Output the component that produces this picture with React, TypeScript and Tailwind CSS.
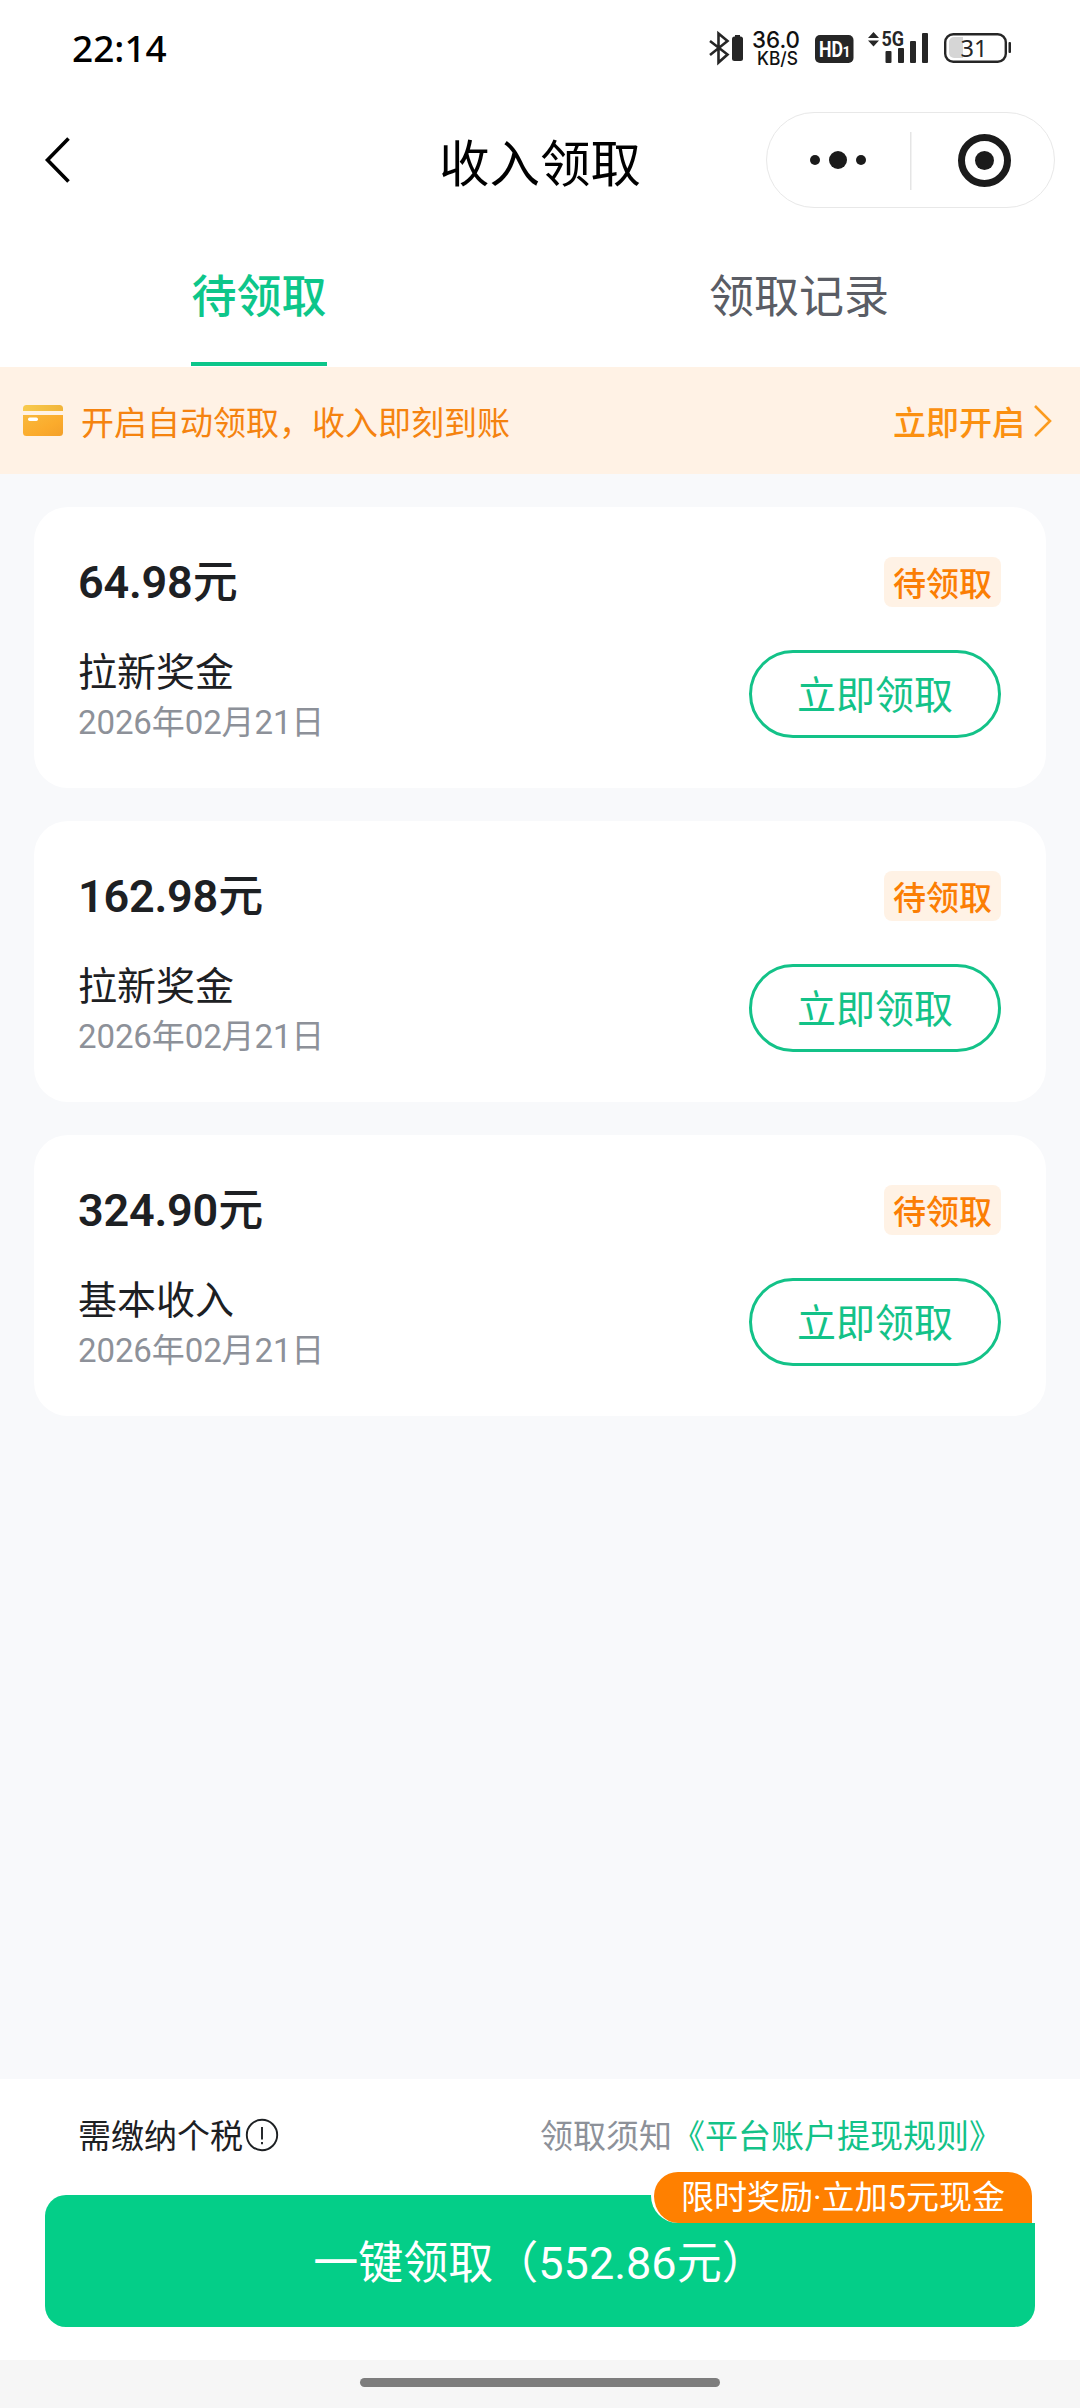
const FONT = "font-[Roboto,'Noto_Sans_CJK_SC',sans-serif]";

const records = [
  { amount: '64.98', title: '拉新奖金', date: '2026年02月21日' },
  { amount: '162.98', title: '拉新奖金', date: '2026年02月21日' },
  { amount: '324.90', title: '基本收入', date: '2026年02月21日' },
];

function StatusIcons() {
  return (
    <svg width="306" height="60" viewBox="708 18 306 60" fill="none">
      {/* bluetooth */}
      <path d="M711 41 L728.5 54.5 L719.5 62.5 V33.5 L728.5 41 L711 55" stroke="#262626" strokeWidth="2.6" strokeLinejoin="miter" />
      <rect x="733" y="36.5" width="11" height="24.5" rx="2.5" fill="#262626" />
      <rect x="736" y="35" width="5" height="3" fill="#262626" />
      {/* network speed */}
      <text x="753" y="48" fontSize="23.5" fontWeight="500" fontFamily="Inter" textLength="48" lengthAdjust="spacingAndGlyphs" fill="#111">36.0</text>
      <text x="758" y="65" fontSize="18" fontWeight="500" fontFamily="Inter" textLength="41" lengthAdjust="spacingAndGlyphs" fill="#111">KB/S</text>
      {/* HD voice */}
      <rect x="816" y="35" width="38.5" height="28" rx="5" fill="#262626" />
      <text x="820" y="57" fontSize="22" fontWeight="700" fontFamily="Roboto" fill="#fff" textLength="24" lengthAdjust="spacingAndGlyphs">HD</text>
      <text x="843.5" y="57" fontSize="14" fontWeight="700" fontFamily="Roboto" fill="#fff">1</text>
      {/* data arrows and signal */}
      <path d="M869 38 L874.5 32 L880 38 Z M869 40.5 L874.5 46.5 L880 40.5 Z" fill="#262626" />
      <text x="882.5" y="46" fontSize="19.5" fontWeight="700" fontFamily="Roboto" fill="#262626" textLength="22.5" lengthAdjust="spacingAndGlyphs">5G</text>
      <rect x="886.5" y="51" width="6" height="12" rx="1" fill="#262626" />
      <rect x="899" y="48" width="6" height="15" rx="1" fill="#262626" />
      <rect x="911" y="41" width="6" height="22" rx="1" fill="#262626" />
      <rect x="923" y="33" width="6" height="30" rx="1" fill="#262626" />
      {/* battery */}
      <path d="M955 37 H964 V58 H955 A5 5 0 0 1 950 53 V42 A5 5 0 0 1 955 37 Z" fill="#d6d6d6" />
      <rect x="946.2" y="34.2" width="60.6" height="27.6" rx="8" stroke="#262626" strokeWidth="2.4" />
      <rect x="1009.5" y="42" width="2.5" height="11" rx="1" fill="#262626" />
      <text x="975" y="57" textAnchor="middle" fontSize="23.5" fontFamily="Noto Sans" fill="#262626">31</text>
    </svg>
  );
}

function CardIcon() {
  return (
    <svg width="42" height="34" viewBox="0 0 42 34">
      <defs>
        <linearGradient id="cardTop" x1="0" y1="0" x2="1" y2="0">
          <stop offset="0" stopColor="#f8cb4e" />
          <stop offset="1" stopColor="#f1b53a" />
        </linearGradient>
        <linearGradient id="cardBody" x1="0" y1="0" x2="1" y2="1">
          <stop offset="0" stopColor="#f9b93c" />
          <stop offset=".6" stopColor="#fbab2c" />
          <stop offset="1" stopColor="#f3a02a" />
        </linearGradient>
      </defs>
      <path d="M1 7 V4.500 A3.500 3.500 0 0 1 4.500 1 H37.500 A3.500 3.500 0 0 1 41 4.500 V7 Z" fill="url(#cardTop)" />
      <path d="M1 11 H41 V28.500 A3.500 3.500 0 0 1 37.500 32 H4.500 A3.500 3.500 0 0 1 1 28.500 Z" fill="url(#cardBody)" />
      <rect x="6" y="13.500" width="10" height="3.500" rx="1.700" fill="#fff" />
    </svg>
  );
}

function RecordCard({ amount, title, date }: { amount: string; title: string; date: string }) {
  return (
    <article className="flex h-[281px] justify-between rounded-[34px] bg-white pr-[45px] pl-[44px]">
      <div className="flex flex-col items-start pt-[46px]">
        <h2 className="flex h-[60px] items-baseline text-[45px] leading-[60px] font-semibold tracking-[-0.2px] text-[#1d2023]">
          {amount}
          <span className="font-medium">元</span>
        </h2>
        <p className="mt-[35px] h-[50px] text-[39px] leading-[50px] text-[#1d2023]">{title}</p>
        <p className="mt-[3px] h-[44px] text-[33px] leading-[44px] tracking-[-0.1px] text-[#8d9199]">{date}</p>
      </div>
      <div className="flex flex-col items-end pt-[50px]">
        <span className="flex h-[50px] w-[117px] items-center justify-center rounded-[8px] bg-[#fff2e5] pt-[5px] text-[33px] leading-[40px] font-medium text-[#fb7e04]">待领取</span>
        <button className="mt-[43px] flex h-[88px] w-[252px] items-center justify-center rounded-full border-[3px] border-[#13c288] pt-[5px] text-[39px] text-[#13c288]">
          立即领取
        </button>
      </div>
    </article>
  );
}

export default function App() {
  return (
    <div className={`${FONT} flex h-[2408px] w-[1080px] flex-col overflow-hidden bg-white`}>
      <div className="flex h-[96px] shrink-0 items-center justify-between pr-[67px] pl-[72px]">
        <span className="font-['Noto_Sans'] text-[37px] font-medium text-black">22:14</span>
        <StatusIcons />
      </div>

      <header className="grid h-[128px] shrink-0 grid-cols-[1fr_auto_1fr] items-center">
        <svg className="ml-[42px]" width="30" height="52" viewBox="0 0 30 52" fill="none">
          <path d="M26.500 4.500 L5.500 26 L26.500 47.500" stroke="#000" strokeWidth="3.600" />
        </svg>
        <h1 className="pt-[9px] text-[50.500px] leading-[60px] text-black">收入领取</h1>
        <div className="mr-[25px] flex h-[96px] w-[289px] items-center justify-self-end rounded-full border-[1.500px] border-[#e8e8e8]">
          <svg width="286" height="94" viewBox="768 113 286 94">
            <circle cx="816" cy="160" r="5" fill="#1b1b1b" />
            <circle cx="839" cy="160" r="9" fill="#1b1b1b" />
            <circle cx="862" cy="160" r="5" fill="#1b1b1b" />
            <rect x="911" y="132" width="1.500" height="58" fill="#e5e5e5" />
            <circle cx="985.500" cy="160.500" r="23" fill="none" stroke="#1b1b1b" strokeWidth="7" />
            <circle cx="985.500" cy="160.500" r="9.500" fill="#1b1b1b" />
          </svg>
        </div>
      </header>

      <nav className="flex h-[143px] shrink-0 text-[45px]">
        <div className="flex w-[518px] justify-center">
          <div className="flex h-[142px] items-center border-b-4 border-[#0dc68a] pt-[9px] font-medium text-[#0dc68a]">待领取</div>
        </div>
        <div className="flex h-[138px] w-[562px] items-center justify-center pt-[9px] text-[#5a5d65]">领取记录</div>
      </nav>

      <section className="flex h-[107px] shrink-0 items-center bg-[#fff2e5] pr-[27px] pl-[22px] text-[33px]">
        <CardIcon />
        <p className="ml-[17px] flex-1 pt-[7px] text-[#f5830f]">开启自动领取，收入即刻到账</p>
        <span className="pt-[7px] font-medium text-[#fb9010]">立即开启</span>
        <svg className="ml-[8px]" width="20" height="36" viewBox="0 0 20 36" fill="none">
          <path d="M2 3 L17 18 L2 33" stroke="#fb9b1e" strokeWidth="2.600" />
        </svg>
      </section>

      <main className="flex flex-1 flex-col gap-[33px] bg-[#f8f9fb] px-[34px] pt-[33px]">
        {records.map((record) => (
          <RecordCard key={record.amount} {...record} />
        ))}
      </main>

      <footer className="flex h-[281px] shrink-0 flex-col px-[45px]">
        <div className="flex h-[116px] items-center justify-between pr-[33px] pl-[33px] text-[33px]">
          <div className="flex items-center text-[#1d2023]">
            需缴纳个税
            <svg className="mb-[5px] ml-[2px]" width="34" height="34" viewBox="0 0 34 34" fill="none">
              <circle cx="17" cy="17" r="15.200" stroke="#1d2023" strokeWidth="1.900" />
              <path d="M17 9 V21.500 M17 24 V26.200" stroke="#1d2023" strokeWidth="1.900" />
            </svg>
          </div>
          <p className="text-[#8d9199]">
            领取须知<span className="text-[#13c288]">《平台账户提现规则》</span>
          </p>
        </div>
        <div className="relative h-[132px]">
          <button className="h-full w-full rounded-[21px] bg-[#04ce88] pt-[5px] text-[45px] text-white">一键领取（552.86元）</button>
          <div className="absolute -top-[26px] right-0 flex h-[54px] w-[384px] items-center justify-center rounded-l-[27px] rounded-tr-[27px] border-[3px] border-b-0 border-white bg-[#ff8000] text-[33px] text-white">
            限时奖励·立加5元现金
          </div>
        </div>
      </footer>

      <div className="flex h-[48px] shrink-0 justify-center bg-[#f6f6f6] pt-[18px]">
        <div className="h-[9px] w-[360px] rounded-full bg-[#7d7d7d]" />
      </div>
    </div>
  );
}
